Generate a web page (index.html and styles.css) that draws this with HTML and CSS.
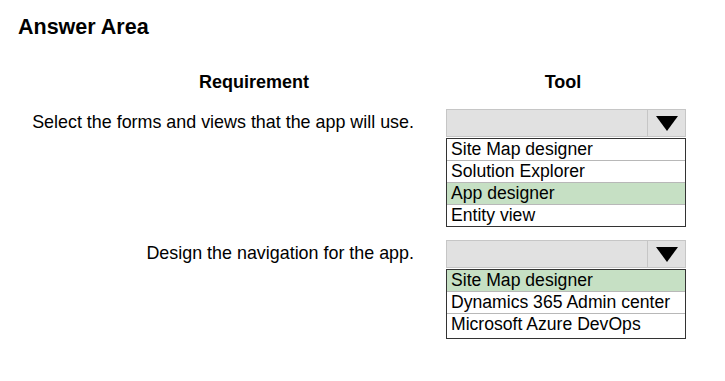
FILE: index.html
```html
<!DOCTYPE html>
<html>
<head>
<meta charset="utf-8">
<link rel="stylesheet" href="styles.css">
</head>
<body>
<h1 class="title">Answer Area</h1>
<div class="grid">
  <div class="head head-req">Requirement</div>
  <div class="head head-tool">Tool</div>

  <div class="label">Select the forms and views that the app will use.</div>
  <div class="dropdown">
    <div class="select">
      <div class="select-value"></div>
      <div class="select-arrow"><svg width="22" height="15" viewBox="0 0 22 15"><polygon points="0,0 22,0 11,15" fill="#000"/></svg></div>
    </div>
    <ul class="options">
      <li>Site Map designer</li>
      <li>Solution Explorer</li>
      <li class="selected">App designer</li>
      <li>Entity view</li>
    </ul>
  </div>

  <div class="label">Design the navigation for the app.</div>
  <div class="dropdown">
    <div class="select">
      <div class="select-value"></div>
      <div class="select-arrow"><svg width="22" height="15" viewBox="0 0 22 15"><polygon points="0,0 22,0 11,15" fill="#000"/></svg></div>
    </div>
    <ul class="options options-tall">
      <li class="selected">Site Map designer</li>
      <li>Dynamics 365 Admin center</li>
      <li>Microsoft Azure DevOps</li>
    </ul>
  </div>
</div>
</body>
</html>
```
FILE: styles.css
```css
html, body {
  margin: 0;
  padding: 0;
  background: #fff;
  color: #000;
  font-family: "Liberation Sans", Arial, sans-serif;
}
body {
  padding-top: 14px;
}
.title {
  margin: 0 0 32px 18px;
  font-size: 21.5px;
  line-height: 26px;
  font-weight: bold;
  letter-spacing: 0;
}
.grid {
  display: grid;
  grid-template-columns: 414px 240px;
  column-gap: 32px;
  row-gap: 13px;
  align-items: start;
}
.head {
  font-size: 18px;
  line-height: 21px;
  font-weight: bold;
  text-align: center;
  margin-bottom: 3px;
}
.head-req {
  padding-left: 94px;
}
.head-tool {
  padding-right: 6px;
}
.label {
  font-size: 17.9px;
  line-height: 21px;
  text-align: right;
  padding-top: 3px;
  white-space: nowrap;
}
.dropdown {
  display: flex;
  flex-direction: column;
}
.select {
  display: flex;
  height: 26px;
  border: 1px solid #c6c6c6;
  background: #e1e1e1;
}
.select-value {
  flex: 1;
}
.select-arrow {
  width: 36px;
  border-left: 1px solid #c6c6c6;
  display: flex;
  align-items: center;
  justify-content: center;
  padding-left: 1px;
}
.options {
  list-style: none;
  margin: 1px 0 0 0;
  padding: 0;
  border: 1px solid #333;
  background: #fff;
}
.options li {
  font-size: 17.6px;
  line-height: 21px;
  padding-left: 4px;
  border-bottom: 1px solid #b8b8b8;
  white-space: nowrap;
}
.options li:last-child {
  border-bottom: none;
}
.options-tall li:last-child {
  padding-bottom: 3px;
}
.options li.selected {
  background: #c6e0c4;
}
```
